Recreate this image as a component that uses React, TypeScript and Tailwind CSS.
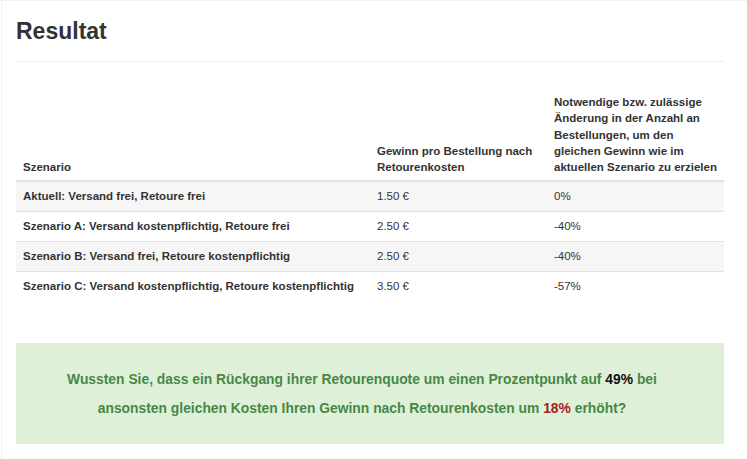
import React from "react";

const rows = [
  { name: "Aktuell: Versand frei, Retoure frei", gewinn: "1.50 €", diff: "0%" },
  { name: "Szenario A: Versand kostenpflichtig, Retoure frei", gewinn: "2.50 €", diff: "-40%" },
  { name: "Szenario B: Versand frei, Retoure kostenpflichtig", gewinn: "2.50 €", diff: "-40%" },
  { name: "Szenario C: Versand kostenpflichtig, Retoure kostenpflichtig", gewinn: "3.50 €", diff: "-57%" },
];

export default function App() {
  return (
    <div
      className="min-h-[459px] w-[747px] bg-white text-[#333]"
      style={{ fontFamily: '"Liberation Sans", Arial, sans-serif' }}
    >
      <div className="ml-px min-h-[459px] border-l border-t border-[#f1f1f1] pl-[14px]">
        <div className="w-[708px]">
          <h2 className="mt-4 text-[23px] font-bold leading-[28px] text-[#333]">Resultat</h2>
          <div className="mt-4 h-px bg-[#eeeeee]" />

          <table className="mt-[25px] w-full table-fixed border-collapse text-[11.5px]">
            <colgroup>
              <col className="w-1/2" />
              <col className="w-1/4" />
              <col className="w-1/4" />
            </colgroup>
            <thead>
              <tr className="border-b-2 border-[#e3e3e3] align-bottom">
                <th className="px-[7px] pt-[7px] pb-[5px] text-left font-bold leading-[16.25px]">Szenario</th>
                <th className="px-[7px] pt-[7px] pb-[5px] text-left font-bold leading-[16.25px]">
                  Gewinn pro Bestellung nach Retourenkosten
                </th>
                <th className="px-[7px] pt-[7px] pb-[5px] text-left font-bold leading-[16.25px]">
                  Notwendige bzw. zulässige Änderung in der Anzahl an Bestellungen, um den gleichen Gewinn wie im
                  aktuellen Szenario zu erzielen
                </th>
              </tr>
            </thead>
            <tbody>
              {rows.map((r, i) => (
                <tr
                  key={r.name}
                  className={`${i > 0 ? "border-t border-[#e3e3e3]" : ""} ${i % 2 === 0 ? "bg-[#f6f6f6]" : "bg-white"}`}
                >
                  <td className="px-[7px] py-[6px] font-bold leading-[17px]">{r.name}</td>
                  <td className="px-[7px] py-[6px] leading-[17px]">{r.gewinn}</td>
                  <td className="px-[7px] py-[6px] leading-[17px]">{r.diff}</td>
                </tr>
              ))}
            </tbody>
          </table>

          <div className="mt-[42px] h-[101px] bg-[#dff0d8] py-[22px] pr-4 text-center text-[13.85px] font-bold leading-[29px] text-[#468847]">
            Wussten Sie, dass ein Rückgang ihrer Retourenquote um einen Prozentpunkt auf{" "}
            <span className="text-[#111]">49%</span> bei
            <br />
            ansonsten gleichen Kosten Ihren Gewinn nach Retourenkosten um{" "}
            <span className="text-[#a31d1d]">18%</span> erhöht?
          </div>
        </div>
      </div>
    </div>
  );
}
